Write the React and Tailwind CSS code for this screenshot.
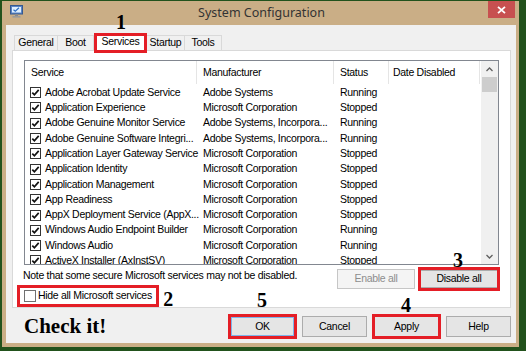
import React from "react";

const services = [
  ["Adobe Acrobat Update Service", "Adobe Systems", "Running"],
  ["Application Experience", "Microsoft Corporation", "Stopped"],
  ["Adobe Genuine Monitor Service", "Adobe Systems, Incorpora...", "Running"],
  ["Adobe Genuine Software Integri...", "Adobe Systems, Incorpora...", "Running"],
  ["Application Layer Gateway Service", "Microsoft Corporation", "Stopped"],
  ["Application Identity", "Microsoft Corporation", "Stopped"],
  ["Application Management", "Microsoft Corporation", "Stopped"],
  ["App Readiness", "Microsoft Corporation", "Stopped"],
  ["AppX Deployment Service (AppX...", "Microsoft Corporation", "Stopped"],
  ["Windows Audio Endpoint Builder", "Microsoft Corporation", "Running"],
  ["Windows Audio", "Microsoft Corporation", "Running"],
  ["ActiveX Installer (AxInstSV)", "Microsoft Corporation", "Stopped"],
];

const tabs = ["General", "Boot", "Services", "Startup", "Tools"];

// red highlight drawn over a control
function RedBox({ className }) {
  return <div className={`pointer-events-none absolute border-[3px] border-[#e41e26] ${className}`} />;
}

function Num({ children, className }) {
  return (
    <span className={`absolute font-['Liberation_Serif',serif] text-[20px] font-bold leading-none text-black ${className}`}>
      {children}
    </span>
  );
}

function Check({ checked }) {
  return (
    <svg width="11" height="11" viewBox="0 0 11 11" className="shrink-0">
      <rect x="0.5" y="0.5" width="10" height="10" fill="#fff" stroke="#333" />
      {checked && <path d="M2.3 5.6 L4.4 7.8 L8.7 2.9" fill="none" stroke="#111" strokeWidth="1.7" />}
    </svg>
  );
}

function Button({ children, disabled, primary, className = "" }) {
  return (
    <div
      className={`flex items-center justify-center border text-[10.5px] tracking-[-0.3px] ${
        disabled
          ? "border-[#c6c6c6] bg-[#f4f4f4] text-[#8d8d8d]"
          : primary
          ? "border-[#3c7fb1] bg-[#e5e5e5] text-black shadow-[inset_0_0_0_1px_#7eb4ea]"
          : "border-[#acacac] bg-[#e5e5e5] text-black"
      } ${className}`}
    >
      {children}
    </div>
  );
}

export default function App() {
  return (
    <div className="h-[351px] w-[526px] overflow-hidden bg-[#22521c] pb-[4px] pl-[2px] pr-[7px] pt-[1px] font-['Liberation_Sans',Arial,sans-serif]">
      <div className="flex h-full flex-col bg-[#caae86] pb-[4px] pl-[4px] pr-[3px]">
        {/* title bar */}
        <div className="relative flex h-[24px] items-start">
          <svg width="13" height="13" viewBox="0 0 13 13" className="ml-[4px] mt-[4px]">
            <rect x="0.5" y="0.5" width="12" height="8.5" fill="#5b86c6" stroke="#36598f" />
            <rect x="2" y="2" width="9" height="5.5" fill="#dff0ff" />
            <path d="M3.5 4.8 L5.3 6.3 L9 2.8" fill="none" stroke="#2f6fc4" strokeWidth="1.2" />
            <rect x="5" y="9" width="3" height="2" fill="#8a8a8a" />
            <rect x="2.5" y="11" width="8" height="1.6" fill="#9a9a9a" />
          </svg>
          <div className="ml-[12px] flex-1 pt-[3px] text-center font-['Noto_Sans',sans-serif] text-[12.5px] leading-[18px] text-[#333]">
            System Configuration
          </div>
          <div className="mr-[1px] flex h-[17px] w-[27px] items-center justify-center bg-[#c75050]">
            <svg width="9" height="8" viewBox="0 0 9 8">
              <path d="M1 0.8 L8 7.2 M8 0.8 L1 7.2" stroke="#fff" strokeWidth="1.8" />
            </svg>
          </div>
        </div>

        {/* client area */}
        <div className="flex flex-1 flex-col bg-[#f0f0f0] pl-[6px] pr-[5px] pt-[8px]">
          {/* tabs */}
          <div className="flex h-[17px] items-end pl-[2px]">
            {tabs.map((t) => {
              const active = t === "Services";
              return (
                <div
                  key={t}
                  className={`relative flex items-center justify-center border border-b-0 border-[#d9d9d9] text-[10.5px] tracking-[-0.3px] text-black ${
                    active
                      ? "z-10 -mb-px h-[18px] w-[53px] bg-white pb-[1px]"
                      : "h-[15px] bg-[#f0f0f0] -ml-px first:ml-0"
                  } ${t === "General" ? "w-[44px]" : ""} ${t === "Boot" ? "w-[37px]" : ""} ${
                    t === "Startup" ? "w-[39px]" : ""
                  } ${t === "Tools" ? "w-[38px]" : ""}`}
                >
                  {t}
                  {active && (
                    <>
                      <RedBox className="-inset-x-[1px] -bottom-[2px] -top-[1px]" />
                      <Num className="-top-[22px] left-[21px]">1</Num>
                    </>
                  )}
                </div>
              );
            })}
          </div>

          {/* tab panel */}
          <div className="flex h-[258px] flex-col border border-[#d9d9d9] bg-white px-[11px] pt-[9px] text-[10.5px] tracking-[-0.3px] text-black">
            <div className="flex h-[205px] overflow-hidden border border-[#828790] bg-white">
              <div className="flex-1 overflow-hidden">
                <div className="flex h-[24px] items-center pb-[1px]">
                  <div className="flex h-full w-[172px] items-center border-r border-[#e5e5e5] pl-[6px]">Service</div>
                  <div className="flex h-full w-[137px] items-center border-r border-[#e5e5e5] pl-[6px]">Manufacturer</div>
                  <div className="flex h-full w-[55px] items-center border-r border-[#e5e5e5] pl-[6px]">Status</div>
                  <div className="flex h-full w-[91px] items-center border-r border-[#e5e5e5] pl-[4px]">Date Disabled</div>
                </div>
                {services.map(([name, maker, status]) => (
                  <div key={name} className="flex h-[15.3px] items-center whitespace-nowrap">
                    <div className="flex w-[172px] items-center gap-[4px] pl-[5px]">
                      <Check checked />
                      <span>{name}</span>
                    </div>
                    <div className="w-[137px] pl-[6px]">{maker}</div>
                    <div className="w-[55px] pl-[6px]">{status}</div>
                  </div>
                ))}
              </div>
              {/* scrollbar */}
              <div className="flex w-[17px] flex-col bg-[#f0f0f0]">
                <div className="flex h-[16px] items-center justify-center">
                  <svg width="7" height="5" viewBox="0 0 7 5">
                    <path d="M0.5 4 L3.5 1 L6.5 4" fill="none" stroke="#606060" strokeWidth="1.3" />
                  </svg>
                </div>
                <div className="mx-[1px] h-[15px] bg-[#cdcdcd]" />
                <div className="flex-1" />
                <div className="flex h-[16px] items-center justify-center">
                  <svg width="7" height="5" viewBox="0 0 7 5">
                    <path d="M0.5 1 L3.5 4 L6.5 1" fill="none" stroke="#606060" strokeWidth="1.3" />
                  </svg>
                </div>
              </div>
            </div>

            <div className="mt-[4px] flex items-start justify-between">
              <div className="flex flex-col">
                <div className="-ml-[1px] h-[12px] leading-[12px]">Note that some secure Microsoft services may not be disabled.</div>
                <div className="relative mt-[8px] flex h-[13px] items-center gap-[2px] self-start">
                  <svg width="12" height="12" viewBox="0 0 12 12">
                    <rect x="0.5" y="0.5" width="11" height="11" fill="#fff" stroke="#707070" />
                  </svg>
                  <span>Hide all Microsoft services</span>
                  <RedBox className="-bottom-[5px] -left-[7px] -right-[7px] -top-[4px]" />
                  <Num className="-right-[21px] top-0">2</Num>
                </div>
              </div>
              <div className="mr-[1px] flex items-start gap-[5px]">
                <Button disabled className="h-[20px] w-[78px]">Enable all</Button>
                <div className="relative mt-[1px]">
                  <Button className="h-[18px] w-[78px]">Disable all</Button>
                  <RedBox className="-inset-x-[2px] -bottom-[3px] -top-[3px]" />
                  <Num className="-top-[20px] left-[33px]">3</Num>
                </div>
              </div>
            </div>
          </div>

          {/* bottom buttons */}
          <div className="mt-[8px] flex items-center justify-between">
            <div className="pl-[12px] font-['Liberation_Serif',serif] text-[21px] font-bold leading-[21px] text-black">Check it!</div>
            <div className="flex gap-[7px]">
              <div className="relative">
                <Button primary className="h-[21px] w-[65px]">OK</Button>
                <RedBox className="-inset-[2px]" />
                <Num className="-top-[26px] left-[27px]">5</Num>
              </div>
              <Button className="h-[21px] w-[65px]">Cancel</Button>
              <div className="relative">
                <Button className="h-[21px] w-[65px]">Apply</Button>
                <RedBox className="-inset-[2px]" />
                <Num className="-top-[21px] left-[27px]">4</Num>
              </div>
              <Button className="h-[21px] w-[65px]">Help</Button>
            </div>
          </div>
        </div>
      </div>
    </div>
  );
}
